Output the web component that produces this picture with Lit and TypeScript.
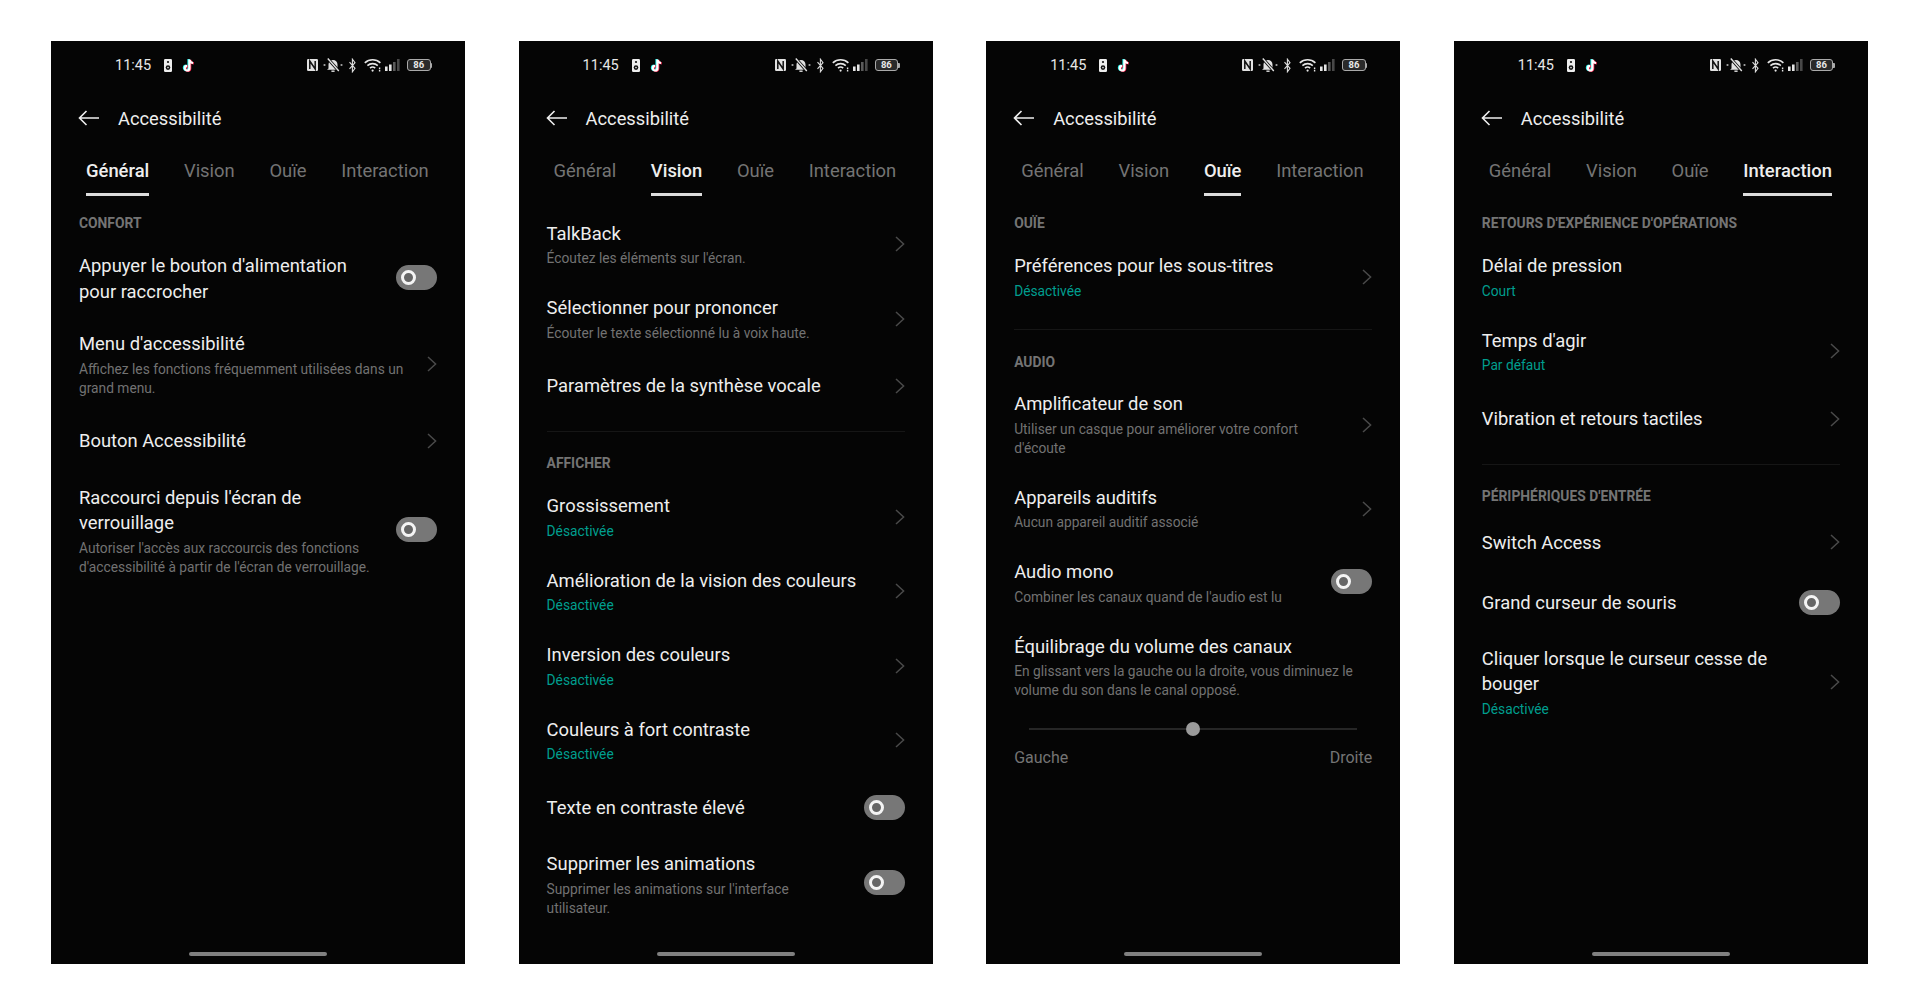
import { LitElement, html, css, nothing } from "lit";
import { customElement } from "lit/decorators.js";

type Row = { t: string; sub?: string; teal?: boolean; c?: "chev" | "tog" };
type Block = { label: string; rows: Row[]; slider?: boolean };
type Screen = { active: number; blocks: Block[] };

const OFF = "Désactivée";
const screens: Screen[] = [
  {
    active: 0,
    blocks: [
      {
        label: "CONFORT",
        rows: [
          { t: "Appuyer le bouton d'alimentation pour raccrocher", c: "tog" },
          { t: "Menu d'accessibilité", sub: "Affichez les fonctions fréquemment utilisées dans un grand menu.", c: "chev" },
          { t: "Bouton Accessibilité", c: "chev" },
          { t: "Raccourci depuis l'écran de verrouillage", sub: "Autoriser l'accès aux raccourcis des fonctions d'accessibilité à partir de l'écran de verrouillage.", c: "tog" },
        ],
      },
    ],
  },
  {
    active: 1,
    blocks: [
      {
        label: "",
        rows: [
          { t: "TalkBack", sub: "Écoutez les éléments sur l'écran.", c: "chev" },
          { t: "Sélectionner pour prononcer", sub: "Écouter le texte sélectionné lu à voix haute.", c: "chev" },
          { t: "Paramètres de la synthèse vocale", c: "chev" },
        ],
      },
      {
        label: "AFFICHER",
        rows: [
          { t: "Grossissement", sub: OFF, teal: true, c: "chev" },
          { t: "Amélioration de la vision des couleurs", sub: OFF, teal: true, c: "chev" },
          { t: "Inversion des couleurs", sub: OFF, teal: true, c: "chev" },
          { t: "Couleurs à fort contraste", sub: OFF, teal: true, c: "chev" },
          { t: "Texte en contraste élevé", c: "tog" },
          { t: "Supprimer les animations", sub: "Supprimer les animations sur l'interface utilisateur.", c: "tog" },
        ],
      },
    ],
  },
  {
    active: 2,
    blocks: [
      {
        label: "OUÏE",
        rows: [{ t: "Préférences pour les sous-titres", sub: OFF, teal: true, c: "chev" }],
      },
      {
        label: "AUDIO",
        slider: true,
        rows: [
          { t: "Amplificateur de son", sub: "Utiliser un casque pour améliorer votre confort d'écoute", c: "chev" },
          { t: "Appareils auditifs", sub: "Aucun appareil auditif associé", c: "chev" },
          { t: "Audio mono", sub: "Combiner les canaux quand de l'audio est lu", c: "tog" },
          { t: "Équilibrage du volume des canaux", sub: "En glissant vers la gauche ou la droite, vous diminuez le volume du son dans le canal opposé." },
        ],
      },
    ],
  },
  {
    active: 3,
    blocks: [
      {
        label: "RETOURS D'EXPÉRIENCE D'OPÉRATIONS",
        rows: [
          { t: "Délai de pression", sub: "Court", teal: true },
          { t: "Temps d'agir", sub: "Par défaut", teal: true, c: "chev" },
          { t: "Vibration et retours tactiles", c: "chev" },
        ],
      },
      {
        label: "PÉRIPHÉRIQUES D'ENTRÉE",
        rows: [
          { t: "Switch Access", c: "chev" },
          { t: "Grand curseur de souris", c: "tog" },
          { t: "Cliquer lorsque le curseur cesse de bouger", sub: OFF, teal: true, c: "chev" },
        ],
      },
    ],
  },
];

const TABS = ["Général", "Vision", "Ouïe", "Interaction"];

const speaker = html`<svg width="8" height="13" viewBox="0 0 8 13">
  <rect width="8" height="13" rx="1.2" fill="#eee" />
  <circle cx="4" cy="3" r="1.1" fill="#111" />
  <circle cx="4" cy="8.6" r="2.3" fill="#111" />
  <circle cx="4" cy="8.6" r="0.8" fill="#eee" />
</svg>`;

const noteD = "M7.2 1v8.7a2.3 2.3 0 1 1-2.3-2.3M7.2 1c.2 2 1.5 3.3 3.6 3.5";
const tiktok = html`<svg width="14" height="15" viewBox="0 0 14 15" fill="none" stroke-width="2.2">
  <path d=${noteD} stroke="#25f4ee" transform="translate(-.7 .1)" />
  <path d=${noteD} stroke="#fe2c55" transform="translate(1 .9)" />
  <path d=${noteD} stroke="#fff" transform="translate(.2 .5)" />
</svg>`;

const nfc = html`<svg width="11" height="12" viewBox="0 0 11 12" fill="none">
  <rect width="11" height="12" rx="1.2" fill="#e2e2e2" />
  <path d="M2.8 10V2L8.2 10V2" stroke="#111" stroke-width="1.5" />
</svg>`;

const mute = html`<svg width="20" height="16" viewBox="0 0 20 16" fill="none">
  <path d="M5.5 11.5V7.5a4.5 4.5 0 0 1 9 0v4l1.5 1.2H4z" fill="#e2e2e2" />
  <path d="M8.4 14.2h3.2" stroke="#e2e2e2" stroke-width="1.4" />
  <path d="M4.5 1.2l11.5 13" stroke="#050505" stroke-width="3" />
  <path d="M4.8 1.5l11 12.5" stroke="#e2e2e2" stroke-width="1.4" />
  <path d="M.6 8h1.8M17.6 8h1.8" stroke="#ccc" stroke-width="1.3" />
</svg>`;

const bt = html`<svg width="7" height="15" viewBox="0 0 7 15" fill="none">
  <path d="M.5 4.2L6 10.4 3.4 13.8V1.2L6 4.6.5 10.8" stroke="#ddd" stroke-width="1.1" />
</svg>`;

const wifi = html`<svg width="18" height="14" viewBox="0 0 18 14" fill="none" stroke="#e6e6e6" stroke-width="1.6">
  <path d="M.8 4.8a11.5 11.5 0 0 1 15.6 0" />
  <path d="M3.4 7.6a7.7 7.7 0 0 1 10.4 0" />
  <path d="M6 10.2a3.8 3.8 0 0 1 5.2 0" />
  <circle cx="8.6" cy="12.6" r="1.1" fill="#e6e6e6" stroke="none" />
  <path d="M15.6 9.6v1.6M15.6 12v1.4" stroke-width="1.4" />
</svg>`;

const signal = html`<svg width="16" height="12" viewBox="0 0 16 12">
  <rect x="0" y="7.5" width="2.6" height="4.5" fill="#e6e6e6" />
  <rect x="4" y="5.5" width="2.6" height="6.5" fill="#e6e6e6" />
  <rect x="8" y="3" width="2.6" height="9" fill="#5a5a5a" />
  <rect x="12" y="0" width="2.6" height="12" fill="#484848" />
</svg>`;

const chevron = html`<svg class="chevron" width="10" height="16" viewBox="0 0 10 16" fill="none">
  <path d="M1 1l7.6 7L1 15" stroke="#4a4a4a" stroke-width="1.5" />
</svg>`;

const back = html`<svg width="21" height="16" viewBox="0 0 21 16" fill="none">
  <path d="M21 8H1.5M8.5 1L1.5 8l7 7" stroke="#eee" stroke-width="1.6" />
</svg>`;

@customElement("app-root")
export class AppRoot extends LitElement {
  static styles = css`
    :host {
      display: block;
      min-height: 100vh;
      background: #fff;
      font-family: Roboto, "Liberation Sans", sans-serif;
    }
    .page {
      display: flex;
      gap: 53.6px;
      padding: 41px 0 0 51px;
    }
    .phone {
      width: 414px;
      height: 923px;
      background: #050505;
      display: flex;
      flex-direction: column;
      color: #eee;
      flex: none;
    }
    .status {
      height: 48px;
      flex: none;
      display: flex;
      align-items: center;
      padding: 0 33px 0 64px;
    }
    .time {
      font-size: 14.5px;
      color: #e8e8e8;
      width: 49px;
    }
    .left-icons {
      display: flex;
      align-items: center;
      gap: 10px;
    }
    .right-icons {
      margin-left: auto;
      display: flex;
      align-items: center;
    }
    .right-icons > span {
      flex: none;
      display: flex;
    }
    .i1 { margin-right: 5px; }
    .i2 { margin-right: 6px; }
    .i3 { margin-right: 8px; }
    .i4 { margin-right: 3px; }
    .i5 { margin-right: 6px; }
    .battery {
      align-items: center;
    }
    .battery-body {
      width: 21.5px;
      height: 10px;
      border: 1px solid #aaa;
      border-radius: 3px;
      font-size: 9.5px;
      font-weight: 700;
      line-height: 10px;
      text-align: center;
      color: #e8e8e8;
      background: #2a2a2a;
    }
    .battery-tip {
      width: 1.5px;
      height: 5px;
      background: #aaa;
      border-radius: 0 1px 1px 0;
    }
    .head {
      height: 58px;
      flex: none;
      display: flex;
      align-items: center;
      gap: 19px;
      padding-left: 27px;
      font-size: 18.3px;
      color: #eee;
    }
    .tabs {
      height: 60px;
      flex: none;
      display: flex;
      gap: 34.7px;
      padding-left: 35px;
      box-sizing: border-box;
    }
    .tab {
      padding-top: 12px;
      font-size: 18.4px;
      line-height: 24px;
      color: #747474;
      display: flex;
      flex-direction: column;
      align-items: stretch;
    }
    .tab.on {
      color: #eee;
      font-weight: 500;
    }
    .tab.on::after {
      content: "";
      height: 2.5px;
      background: #ddd;
      margin-top: 10px;
    }
    .list {
      padding: 0 28px;
    }
    .divider {
      height: 1px;
      background: #161616;
      margin: 15px 0;
    }
    .label {
      height: 32.7px;
      display: flex;
      align-items: center;
      font-size: 13.85px;
      font-weight: 700;
      color: #747474;
    }
    .row {
      display: flex;
      align-items: center;
      min-height: 60px;
      box-sizing: border-box;
      padding: 13.5px 0;
    }
    .text {
      flex: 1;
      min-width: 0;
    }
    .text.pad-tog {
      padding-right: 24px;
    }
    .text.pad-chev {
      padding-right: 15px;
    }
    .t {
      font-size: 18.4px;
      line-height: 25.5px;
      color: #eee;
    }
    .s {
      font-size: 13.75px;
      line-height: 19px;
      margin-top: 3px;
      color: #727272;
    }
    .s.teal {
      color: #009e8e;
    }
    .chevron {
      flex: none;
    }
    .toggle {
      flex: none;
      width: 41px;
      height: 25px;
      border-radius: 13px;
      background: #777;
      display: flex;
      align-items: center;
      padding-left: 5px;
      box-sizing: border-box;
    }
    .toggle.shift {
      margin-bottom: 3px;
    }
    .knob {
      width: 15px;
      height: 15px;
      box-sizing: border-box;
      border-radius: 50%;
      border: 3.2px solid #f4f4f4;
      background: #666;
    }
    .slider {
      display: flex;
      align-items: center;
      padding: 6px 15px 0;
      height: 18px;
    }
    .line {
      flex: 1;
      height: 2px;
      background: #262626;
    }
    .thumb {
      width: 14px;
      height: 14px;
      border-radius: 50%;
      background: #9a9a9a;
      flex: none;
    }
    .ends {
      display: flex;
      justify-content: space-between;
      margin-top: 8px;
      font-size: 16px;
      line-height: 24px;
      color: #747474;
    }
    .bar {
      margin: auto auto 8px;
      width: 138px;
      height: 4px;
      border-radius: 2px;
      background: #808080;
      flex: none;
    }
  `;

  private renderRow(r: Row) {
    const rowHasExtra = !!r.sub || r.t.length > 35;
    return html`<div class="row">
      <div class="text ${r.c ? "pad-" + r.c : ""}">
        <div class="t">${r.t}</div>
        ${r.sub ? html`<div class="s ${r.teal ? "teal" : ""}">${r.sub}</div>` : nothing}
      </div>
      ${r.c === "chev" ? chevron : nothing}
      ${r.c === "tog"
        ? html`<div class="toggle ${rowHasExtra ? "shift" : ""}"><div class="knob"></div></div>`
        : nothing}
    </div>`;
  }

  private renderScreen(s: Screen) {
    return html`<section class="phone">
      <div class="status">
        <span class="time">11:45</span>
        <span class="left-icons">${speaker}${tiktok}</span>
        <span class="right-icons">
          <span class="i1">${nfc}</span>
          <span class="i2">${mute}</span>
          <span class="i3">${bt}</span>
          <span class="i4">${wifi}</span>
          <span class="i5">${signal}</span>
          <span class="battery"><span class="battery-body">86</span><span class="battery-tip"></span></span>
        </span>
      </div>
      <div class="head">${back}<span>Accessibilité</span></div>
      <div class="tabs">
        ${TABS.map((t, i) => html`<div class="tab ${i === s.active ? "on" : ""}">${t}</div>`)}
      </div>
      <div class="list">
        ${s.blocks.map(
          (b, i) => html`
            ${i > 0 ? html`<div class="divider"></div>` : nothing}
            ${b.label ? html`<div class="label">${b.label}</div>` : nothing}
            ${b.rows.map((r) => this.renderRow(r))}
            ${b.slider
              ? html`<div class="slider">
                    <div class="line"></div>
                    <div class="thumb"></div>
                    <div class="line"></div>
                  </div>
                  <div class="ends"><span>Gauche</span><span>Droite</span></div>`
              : nothing}
          `
        )}
      </div>
      <div class="bar"></div>
    </section>`;
  }

  render() {
    return html`<div class="page">${screens.map((s) => this.renderScreen(s))}</div>`;
  }
}
